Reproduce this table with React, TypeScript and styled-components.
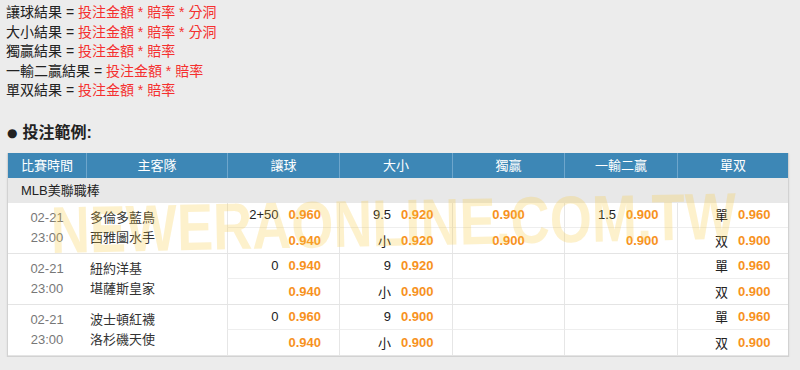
import React from "react";
import styled, { createGlobalStyle } from "styled-components";

const GlobalStyle = createGlobalStyle`
  html, body {
    margin: 0;
    padding: 0;
    background: #ececec;
  }
  body {
    font-family: "Liberation Sans", "Noto Sans CJK TC", sans-serif;
    color: #222;
  }
`;

const COLS = "78px 141px 112px 113px 112px 113px 111px";

const Page = styled.div`
  padding: 3px 6px 0 6px;
`;

const RuleList = styled.div`
  font-size: 14px;
  line-height: 19.5px;
`;

const Red = styled.span`
  color: #f5302f;
`;

const Heading = styled.div`
  margin-top: 22px;
  font-size: 16px;
  font-weight: bold;
  line-height: 20px;
  display: flex;
  align-items: center;
  gap: 5px;
  padding-left: 1px;
`;

const Bullet = styled.span`
  font-family: "DejaVu Sans", sans-serif;
  font-size: 12px;
  line-height: 1;
`;

const Table = styled.div`
  position: relative;
  margin: 10px 0 0 1px;
  width: 782px;
  border: 1px solid #d2d2d2;
  border-top: none;
  box-sizing: border-box;
  box-shadow: 0 1px 2px rgba(0, 0, 0, 0.08);
  overflow: hidden;
`;

const HeadRow = styled.div`
  display: grid;
  grid-template-columns: ${COLS};
  background: #3d87b6;
  color: #fff;
  font-size: 13px;
`;

const HeadCell = styled.div<{ $first?: boolean }>`
  padding: 6px 0;
  line-height: 13px;
  text-align: center;
  border-left: ${(p) => (p.$first ? "none" : "1px solid #6ea6cc")};
`;

const LeagueRow = styled.div`
  background: #e8e8e8;
  height: 25px;
  line-height: 25px;
  padding-left: 13px;
  font-size: 13px;
  color: #222;
`;

const Game = styled.div`
  display: grid;
  grid-template-columns: ${COLS};
  grid-template-rows: 25px 25px;
  background: #fff;
  border-bottom: 1px solid #e4e4e4;
  font-size: 13px;
  &:last-of-type {
    border-bottom: none;
  }
`;

const Stack = styled.div<{ $align: "center" | "left" }>`
  grid-row: 1 / span 2;
  display: flex;
  flex-direction: column;
  justify-content: center;
  line-height: 20px;
  text-align: ${(p) => p.$align};
  padding-left: ${(p) => (p.$align === "left" ? "4px" : "0")};
`;

const Time = styled.div`
  color: #777;
`;

const Team = styled.div`
  color: #333;
`;

const OddsCell = styled.div<{ $top?: boolean; $center?: boolean }>`
  display: flex;
  align-items: center;
  justify-content: ${(p) => (p.$center ? "center" : "stretch")};
  border-left: 1px solid #e6e6e6;
  border-bottom: ${(p) => (p.$top ? "1px solid #eeeeee" : "none")};
`;

const Label = styled.span`
  flex: 1;
  text-align: right;
  padding-right: 5px;
  color: #222;
`;

const Odds = styled.span<{ $solo?: boolean }>`
  flex: ${(p) => (p.$solo ? "none" : 1)};
  text-align: left;
  padding-left: ${(p) => (p.$solo ? "0" : "5px")};
  color: #f7921e;
  font-weight: bold;
`;

const Watermark = styled.div`
  position: absolute;
  left: 42px;
  top: 44px;
  font-family: "Liberation Sans", sans-serif;
  font-size: 66px;
  font-weight: bold;
  line-height: 1;
  white-space: nowrap;
  color: #f9c93a;
  opacity: 0.25;
  transform-origin: left top;
  transform: rotate(-1.2deg) scaleX(0.82);
  pointer-events: none;
`;

type Pair = [string, string];

interface GameData {
  home: string;
  away: string;
  hdp: [Pair, Pair];
  ou: [Pair, Pair];
  ml?: [string, string];
  two?: [Pair, Pair];
  oe: [Pair, Pair];
}

const games: GameData[] = [
  {
    home: "多倫多藍鳥",
    away: "西雅圖水手",
    hdp: [["2+50", "0.960"], ["", "0.940"]],
    ou: [["9.5", "0.920"], ["小", "0.920"]],
    ml: ["0.900", "0.900"],
    two: [["1.5", "0.900"], ["", "0.900"]],
    oe: [["單", "0.960"], ["双", "0.900"]],
  },
  {
    home: "紐約洋基",
    away: "堪薩斯皇家",
    hdp: [["0", "0.940"], ["", "0.940"]],
    ou: [["9", "0.920"], ["小", "0.900"]],
    oe: [["單", "0.960"], ["双", "0.900"]],
  },
  {
    home: "波士頓紅襪",
    away: "洛杉磯天使",
    hdp: [["0", "0.960"], ["", "0.940"]],
    ou: [["9", "0.900"], ["小", "0.900"]],
    oe: [["單", "0.960"], ["双", "0.900"]],
  },
];

const rules: [string, string][] = [
  ["讓球結果", "投注金額 * 賠率 * 分洞"],
  ["大小結果", "投注金額 * 賠率 * 分洞"],
  ["獨贏結果", "投注金額 * 賠率"],
  ["一輸二贏結果", "投注金額 * 賠率"],
  ["單双結果", "投注金額 * 賠率"],
];

const headers = ["比賽時間", "主客隊", "讓球", "大小", "獨贏", "一輸二贏", "單双"];

const PairCell = ({ pair, top }: { pair?: Pair; top: boolean }) => (
  <OddsCell $top={top}>
    {pair && (
      <>
        <Label>{pair[0]}</Label>
        <Odds>{pair[1]}</Odds>
      </>
    )}
  </OddsCell>
);

const App = () => {
  return (
    <Page>
      <GlobalStyle />
      <RuleList>
        {rules.map(([name, formula]) => (
          <div key={name}>
            {name} = <Red>{formula}</Red>
          </div>
        ))}
      </RuleList>
      <Heading>
        <Bullet>●</Bullet>
        投注範例:
      </Heading>
      <Table>
        <HeadRow>
          {headers.map((h, i) => (
            <HeadCell key={h} $first={i === 0}>
              {h}
            </HeadCell>
          ))}
        </HeadRow>
        <LeagueRow>MLB美聯職棒</LeagueRow>
        {games.map((g) => (
          <Game key={g.home}>
            <Stack $align="center">
              <Time>02-21</Time>
              <Time>23:00</Time>
            </Stack>
            <Stack $align="left">
              <Team>{g.home}</Team>
              <Team>{g.away}</Team>
            </Stack>
            {[0, 1].map((r) => (
              <React.Fragment key={r}>
                <PairCell pair={g.hdp[r]} top={r === 0} />
                <PairCell pair={g.ou[r]} top={r === 0} />
                <OddsCell $top={r === 0} $center>
                  {g.ml && <Odds $solo>{g.ml[r]}</Odds>}
                </OddsCell>
                <PairCell pair={g.two?.[r]} top={r === 0} />
                <PairCell pair={g.oe[r]} top={r === 0} />
              </React.Fragment>
            ))}
          </Game>
        ))}
        <Watermark>NEWERAONLINE.COM.TW</Watermark>
      </Table>
    </Page>
  );
};

export default App;
